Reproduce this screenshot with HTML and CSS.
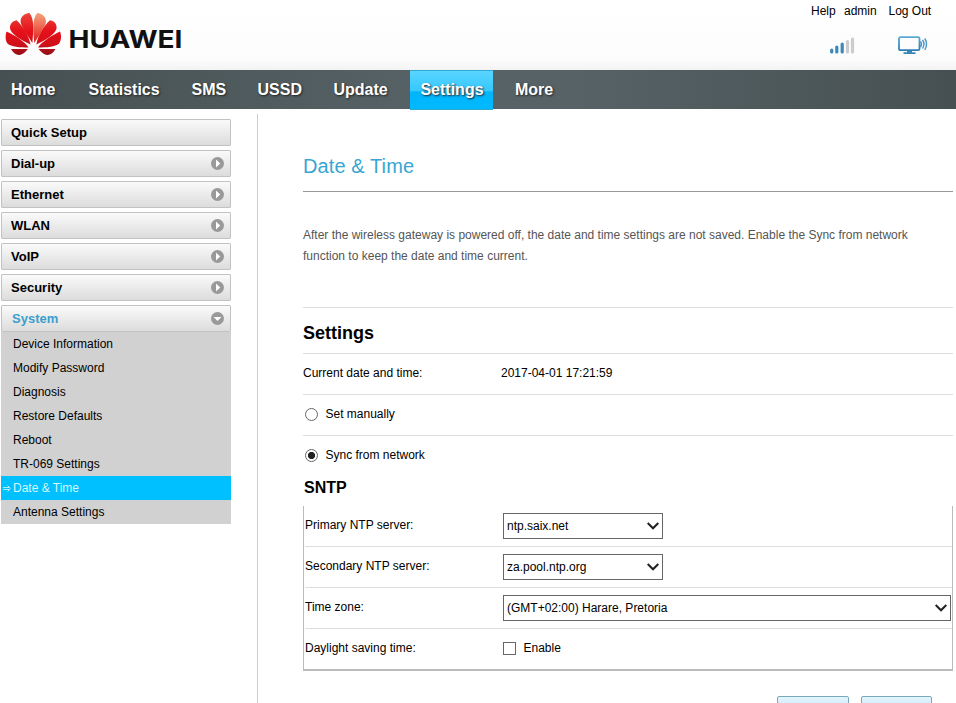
FILE: index.html
```html
<!DOCTYPE html>
<html lang="en">
<head>
<meta charset="utf-8">
<title>Date &amp; Time</title>
<link rel="stylesheet" href="styles.css">
</head>
<body>
<svg class="defs" width="0" height="0">
  <defs>
    <linearGradient id="red" gradientUnits="userSpaceOnUse" x1="0" y1="13" x2="0" y2="55"><stop offset="0" stop-color="#e8473c"/><stop offset=".45" stop-color="#e60f1a"/><stop offset=".75" stop-color="#d01018"/><stop offset="1" stop-color="#8f1018"/></linearGradient>
    <linearGradient id="warm" x1="0" y1="0" x2="0" y2="1"><stop offset="0" stop-color="#f3a27c"/><stop offset=".4" stop-color="#ee7058"/><stop offset="1" stop-color="#e01818"/></linearGradient>
    <linearGradient id="blue" x1="0" y1="0" x2="0" y2="1"><stop offset="0" stop-color="#5aa9d6"/><stop offset="1" stop-color="#2b7fb5"/></linearGradient>
    <symbol id="right" viewBox="0 0 13 13"><circle cx="6.5" cy="6.5" r="6.5" fill="#999"/><path d="M5 2.600 9.200 6.500 5 10.400Z" fill="#fff"/></symbol>
    <symbol id="down" viewBox="0 0 13 13"><circle cx="6.5" cy="6.5" r="6.5" fill="#999"/><path d="M2.600 5h7.800L6.500 8.900Z" fill="#fff"/></symbol>
  </defs>
</svg>
<header class="header">
  <svg class="logo" width="184" height="50" viewBox="0 0 184 50">
    <g fill="url(#red)">
      <path d="M32.300 43C28 36 22 28 20.700 22.500C20 17 24 13.500 29.500 13C34.500 19 33.500 31 32.300 43Z"/>
      <path d="M30.500 44.500C21 40 11 34 10 28.500C9.500 24 12.500 21 16.500 20.200C23 26 28.500 35 30.500 44.500Z"/>
      <path d="M28.500 47.500C20 47.500 11 47 7.500 43.500C5 40 5.300 35.500 6.500 31.500C15 35.500 24 41 28.500 47.500Z"/>
      <path d="M27.800 49C22 49 16 49 11 49C14 54 17 55.500 20.500 54.700C24 53.500 26 51.500 27.800 49Z"/>
      <path d="M36.300 44.500C38 35 43.500 26 50 20.200C54.500 21 57 24 56.500 28.500C55.500 34 45.500 40 36.300 44.500Z"/>
      <path d="M38 47.500C42.500 41 52 35.500 60 31.500C61.500 35.500 61.500 40 59 43.500C55.500 47 46.500 47.500 38 47.500Z"/>
      <path d="M38.700 49C44 49 50 49 55.500 49C52.500 54 49.500 55.500 46 54.700C42.500 53.500 40.500 51.500 38.700 49Z"/>
    </g>
    <path fill="url(#warm)" d="M34.400 43C33 31 32 19 37.200 13C42.500 13.500 46.500 17 45.900 22.500C44.500 28 38.500 36 34.400 43Z"/>
    <text class="wordmark" x="68.500" y="47.700" textLength="114" lengthAdjust="spacingAndGlyphs">HUAWEI</text>
  </svg>
  <div class="tools">
    <div class="links"><a class="help">Help</a><a class="user">admin</a><a>Log Out</a></div>
    <div class="status">
      <svg width="26" height="19" viewBox="0 0 26 19" stroke-width="3.200" stroke-linecap="round"><path d="M1.700 16v-2M6.800 16v-5M12.200 16V8" stroke="#3b89b8"/><path d="M17.500 16V5.500M22.500 16V3" stroke="#ccc"/></svg>
      <svg width="30" height="19" viewBox="0 0 30 19" fill="none" stroke="url(#blue)"><rect x="0" y="1.200" width="20.500" height="13" rx="1.500" stroke-width="1.800"/><path d="M8 15h5v1.200h3.500v1.800h-12v-1.800H8Z" fill="#3988b8" stroke="none"/><path d="M21.500 5.500q2 2.500 0 5.500M23.500 4q3 4 0 8.500M25.800 2.500q3.500 5.500 0 11.500" stroke="#4795c4" stroke-width="1.400"/></svg>
    </div>
  </div>
</header>
<nav class="nav">
  <a class="n1">Home</a><a class="n2">Statistics</a><a class="n3">SMS</a><a class="n4">USSD</a><a class="n5">Update</a><a class="active">Settings</a><a class="n7">More</a>
</nav>
<div class="page">
  <aside class="side">
    <div class="item">Quick Setup</div>
    <div class="item">Dial-up<svg><use href="#right"/></svg></div>
    <div class="item">Ethernet<svg><use href="#right"/></svg></div>
    <div class="item">WLAN<svg><use href="#right"/></svg></div>
    <div class="item">VoIP<svg><use href="#right"/></svg></div>
    <div class="item">Security<svg><use href="#right"/></svg></div>
    <div class="item open">System<svg><use href="#down"/></svg></div>
    <ul class="sub">
      <li>Device Information</li><li>Modify Password</li><li>Diagnosis</li><li>Restore Defaults</li><li>Reboot</li><li>TR-069 Settings</li>
      <li class="current"><svg class="arrow" viewBox="0 0 9 7"><path d="M0 2.500h6M0 4.500h6M4.500.5l3 3-3 3" fill="none" stroke="#c5f2ff" stroke-width=".9"/></svg>Date &amp; Time</li>
      <li>Antenna Settings</li>
    </ul>
  </aside>
  <main class="main">
    <h1>Date &amp; Time</h1>
    <p class="intro">After the wireless gateway is powered off, the date and time settings are not saved. Enable the Sync from network function to keep the date and time current.</p>
    <h2>Settings</h2>
    <div class="row"><span class="label">Current date and time:</span><span>2017-04-01 17:21:59</span></div>
    <div class="row"><i class="radio"></i><span>Set manually</span></div>
    <div class="row last"><i class="radio on"></i><span>Sync from network</span></div>
    <h3>SNTP</h3>
    <section class="box">
      <div class="field"><span class="label">Primary NTP server:</span><div class="select">ntp.saix.net<svg viewBox="0 0 12 8"><path d="m.7 1 5.300 5.300L11.300 1"/></svg></div></div>
      <div class="field"><span class="label">Secondary NTP server:</span><div class="select">za.pool.ntp.org<svg viewBox="0 0 12 8"><path d="m.7 1 5.300 5.300L11.300 1"/></svg></div></div>
      <div class="field"><span class="label">Time zone:</span><div class="select wide">(GMT+02:00) Harare, Pretoria<svg viewBox="0 0 12 8"><path d="m.7 1 5.300 5.300L11.300 1"/></svg></div></div>
      <div class="field"><span class="label">Daylight saving time:</span><i class="check"></i><span class="enable">Enable</span></div>
    </section>
    <div class="buttons"><span class="button"></span><span class="button second"></span></div>
  </main>
</div>
</body>
</html>
```
FILE: styles.css
```css
* { box-sizing: border-box; }
body { margin: 0; height: 703px; overflow: hidden; background: #fff; color: #000; font: 12px/20px "Liberation Sans", Arial, sans-serif; }
.defs { position: absolute; }
.header { height: 70px; display: flex; justify-content: space-between; background: linear-gradient(#fff 0, #fcfcfc 60px, #f3f3f3 70px); }
.logo { overflow: visible; }
.wordmark { font: 700 24.5px Inter, sans-serif; fill: #111; }
.tools { width: 145px; padding-top: 1px; }
.links { display: flex; }
.help { width: 33px; }
.user { width: 44.5px; }
.status { display: flex; justify-content: space-between; padding: 15px 27px 0 19px; }
.status svg { overflow: visible; }
.nav { height: 39px; display: flex; background: linear-gradient(90deg, #465053, #566265 45%, #566265 60%, #465053); color: #fff; font-size: 16px; font-weight: bold; line-height: 39px; text-shadow: 1px 1px 2px #222; }
.nav a { flex: none; }
.n1 { margin-left: 11px; width: 77.5px; }
.n2 { width: 103px; }
.n3 { width: 66px; }
.n4 { width: 76px; }
.n5 { width: 76.5px; }
.active { width: 83px; height: 40px; padding-left: 1px; text-align: center; background: linear-gradient(#5ad5ff 0, #35c8ff 52%, #02b5fc 55%, #00b9ff); border: 1px solid #2da8d0; border-width: 1px 0; line-height: 37px; z-index: 1; }
.n7 { margin-left: 22px; }
.page { display: flex; height: 594px; padding-left: 1px; }
.side { width: 230px; padding-top: 10px; flex: none; }
.item { height: 27px; margin-bottom: 4px; padding: 0 6px 0 9px; display: flex; align-items: center; justify-content: space-between; border: 1px solid #c2c2c2; border-radius: 1px; background: linear-gradient(#fafafa, #dcdcdc); font-size: 13px; font-weight: bold; }
.item svg { width: 13px; height: 13px; }
.open { margin-bottom: 0; color: #3b9fce; padding-left: 10px; }
.sub { margin: 0; padding: 0; list-style: none; background: #d1d1d1; }
.sub li { height: 24px; padding-left: 12px; line-height: 24px; }
.sub .current { display: flex; align-items: center; padding-left: 2px; background: #00c0ff; color: #d8f7ff; }
.arrow { width: 9px; height: 7px; margin-right: 1px; }
.main { margin: 5px 3px 0 26px; padding-left: 45px; flex: 1; border-left: 1px solid #ccc; }
h1 { margin: 0; height: 78px; padding-top: 42px; border-bottom: 1px solid #999; color: #38a6d3; font-size: 20px; font-weight: normal; line-height: 20px; letter-spacing: .1px; }
.intro { margin: 0; height: 116px; padding-top: 33px; border-bottom: 1px solid #ddd; color: #555; line-height: 21px; padding-right: 30px; }
h2 { margin: 0; height: 46px; border-bottom: 1px solid #ddd; font-size: 18px; line-height: 51px; }
.row { height: 41px; display: flex; border-bottom: 1px solid #ddd; line-height: 39px; }
.label { width: 198px; flex: none; }
.last { height: 40px; border: 0; }
.radio { width: 13px; height: 13px; margin: 13px 7.5px 0 2px; border: 1px solid #666; border-radius: 50%; flex: none; }
.on { background: radial-gradient(circle, #222 0 3.3px, #fff 3.9px); }
h3 { margin: 0; height: 30px; padding-left: 1px; font-size: 16px; line-height: 24px; }
.box { height: 165px; border: 1px solid #bbb; border-top: 0; border-bottom-width: 2px; padding-left: 1px; }
.field { height: 41px; display: flex; border-bottom: 1px solid #ddd; line-height: 38px; }
.field:last-child { border: 0; }
.select { width: 160px; height: 26px; margin-top: 7px; padding: 0 3px; border: 1px solid #666; display: flex; align-items: center; justify-content: space-between; line-height: 24px; }
.select svg { width: 12px; height: 8px; fill: none; stroke: #222; stroke-width: 2; }
.wide { width: 448px; }
.check { width: 13px; height: 13px; margin-top: 13px; border: 1px solid #666; }
.enable { margin-left: 7.5px; }
.buttons { display: flex; justify-content: flex-end; gap: 12px; padding: 25px 21px 0 0; }
.button { width: 72px; height: 24px; border: 1px solid #7aa8b8; border-radius: 2px; background: linear-gradient(#e3f4fd, #b8e2f7); }
.second { width: 71px; }
```
